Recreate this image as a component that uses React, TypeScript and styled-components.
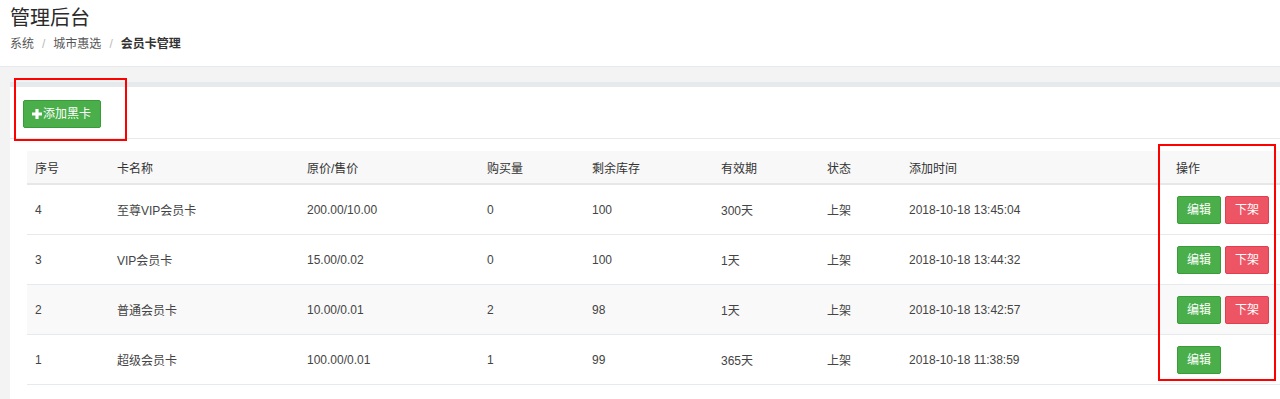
import React from "react";
import styled, { createGlobalStyle } from "styled-components";

const Global = createGlobalStyle`
  html, body { margin: 0; padding: 0; }
  body {
    background: #f3f3f4;
    font-family: "Liberation Sans", "Noto Sans CJK SC", sans-serif;
    font-size: 12px;
    color: #333;
    overflow: hidden;
  }
`;

const Page = styled.div`
  position: relative;
  width: 1280px;
  height: 399px;
  overflow: hidden;
`;

const Heading = styled.div`
  background: #fff;
  border-bottom: 1px solid #e7eaec;
  height: 66px;
  padding: 0 10px;
  box-sizing: content-box;
`;

const Title = styled.h2`
  margin: 0;
  padding-top: 6px;
  font-size: 20px;
  font-weight: 400;
  line-height: 24px;
  color: #2b2b2b;
`;

const Crumbs = styled.ol`
  list-style: none;
  margin: 6px 0 0;
  padding: 0;
  display: flex;
  font-size: 12px;
  line-height: 16px;
  color: #555;
`;

const Crumb = styled.li<{ $active?: boolean }>`
  font-weight: ${(p) => (p.$active ? 700 : 400)};
  color: ${(p) => (p.$active ? "#333" : "#555")};
`;

const Sep = styled.span`
  color: #bbb;
  padding: 0 8px;
`;

const Wrapper = styled.div`
  padding: 15px 0 0 10px;
`;

const Card = styled.div`
  background: #fff;
  border-top: 5px solid #e7eaec;
  width: 1300px;
  min-height: 330px;
`;

const Toolbar = styled.div`
  padding: 13px 13px 10px;
  border-bottom: 1px solid #e7eaec;
`;

const Button = styled.button<{ $tone: "green" | "red" }>`
  display: inline-flex;
  align-items: center;
  justify-content: center;
  gap: 1px;
  height: 28px;
  padding: 0 9px;
  border-radius: 2px;
  border: 1px solid ${(p) => (p.$tone === "green" ? "#389d38" : "#e53c50")};
  background: ${(p) => (p.$tone === "green" ? "#4aaf4a" : "#ed5565")};
  color: #fff;
  font-family: inherit;
  font-size: 12px;
  line-height: 1;
  cursor: pointer;
`;

const AddButton = styled(Button)`
  height: 28px;
  padding: 0 9px 0 8px;
`;

const TableArea = styled.div`
  padding: 12px 0 0 17px;
`;

const Table = styled.table`
  width: 1270px;
  table-layout: fixed;
  border-collapse: collapse;
`;

const Th = styled.th`
  text-align: left;
  font-weight: 400;
  color: #333;
  background: #f8f8f8;
  height: 32px;
  padding: 0 8px;
  border-bottom: 2px solid #e7e7e7;
`;

const Tr = styled.tr<{ $shade?: boolean }>`
  background: ${(p) => (p.$shade ? "#f9f9f9" : "#fff")};
`;

const Td = styled.td`
  height: 49px;
  padding: 0 8px;
  border-bottom: 1px solid #e7eaec;
  color: #444;
`;

const ActionTd = styled(Td)`
  padding-left: 9px;
`;

const Actions = styled.div`
  display: flex;
  gap: 4px;
`;

const Mark = styled.div<{ $x: number; $y: number; $w: number; $h: number }>`
  position: absolute;
  left: ${(p) => p.$x}px;
  top: ${(p) => p.$y}px;
  width: ${(p) => p.$w}px;
  height: ${(p) => p.$h}px;
  border: 2px solid #f00;
  box-sizing: border-box;
  pointer-events: none;
`;

const PlusIcon = () => (
  <svg width="10" height="10" viewBox="0 0 10 10" aria-hidden>
    <path d="M3.4 0h3.2v3.4H10v3.2H6.6V10H3.4V6.6H0V3.4h3.4z" fill="#fff" />
  </svg>
);

const cols = [82, 190, 180, 105, 129, 106, 82, 267, 129];
const heads = ["序号", "卡名称", "原价/售价", "购买量", "剩余库存", "有效期", "状态", "添加时间", "操作"];

const rows = [
  { id: "4", name: "至尊VIP会员卡", price: "200.00/10.00", sold: "0", stock: "100", term: "300天", state: "上架", time: "2018-10-18 13:45:04", off: true },
  { id: "3", name: "VIP会员卡", price: "15.00/0.02", sold: "0", stock: "100", term: "1天", state: "上架", time: "2018-10-18 13:44:32", off: true },
  { id: "2", name: "普通会员卡", price: "10.00/0.01", sold: "2", stock: "98", term: "1天", state: "上架", time: "2018-10-18 13:42:57", off: true, shade: true },
  { id: "1", name: "超级会员卡", price: "100.00/0.01", sold: "1", stock: "99", term: "365天", state: "上架", time: "2018-10-18 11:38:59", off: false },
];

export default function App() {
  return (
    <Page>
      <Global />
      <Heading>
        <Title>管理后台</Title>
        <Crumbs>
          <Crumb>系统</Crumb>
          <Sep>/</Sep>
          <Crumb>城市惠选</Crumb>
          <Sep>/</Sep>
          <Crumb $active>会员卡管理</Crumb>
        </Crumbs>
      </Heading>
      <Wrapper>
        <Card>
          <Toolbar>
            <AddButton $tone="green">
              <PlusIcon />
              添加黑卡
            </AddButton>
          </Toolbar>
          <TableArea>
            <Table>
              <colgroup>
                {cols.map((w, i) => (
                  <col key={i} style={{ width: w }} />
                ))}
              </colgroup>
              <thead>
                <tr>
                  {heads.map((h) => (
                    <Th key={h}>{h}</Th>
                  ))}
                </tr>
              </thead>
              <tbody>
                {rows.map((r) => (
                  <Tr key={r.id} $shade={r.shade}>
                    <Td>{r.id}</Td>
                    <Td>{r.name}</Td>
                    <Td>{r.price}</Td>
                    <Td>{r.sold}</Td>
                    <Td>{r.stock}</Td>
                    <Td>{r.term}</Td>
                    <Td>{r.state}</Td>
                    <Td>{r.time}</Td>
                    <ActionTd>
                      <Actions>
                        <Button $tone="green">编辑</Button>
                        {r.off && <Button $tone="red">下架</Button>}
                      </Actions>
                    </ActionTd>
                  </Tr>
                ))}
              </tbody>
            </Table>
          </TableArea>
        </Card>
      </Wrapper>
      <Mark $x={14} $y={78} $w={113} $h={63} />
      <Mark $x={1158} $y={144} $w={118} $h={237} />
    </Page>
  );
}
